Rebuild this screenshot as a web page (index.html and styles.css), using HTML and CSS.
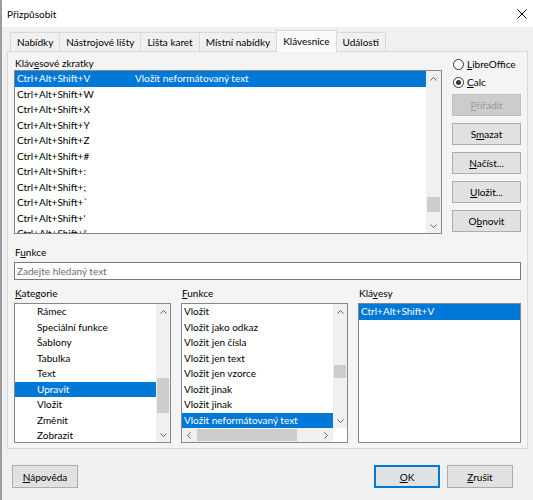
FILE: index.html
```html
<!DOCTYPE html>
<html lang="cs">
<head>
<meta charset="utf-8">
<title>Přizpůsobit</title>
<link rel="stylesheet" href="styles.css">
</head>
<body>
<div class="window">
  <header class="titlebar">
    <span class="title">Přizpůsobit</span>
    <svg class="close" width="10" height="10" viewBox="0 0 10 10"><path d="M0.5 0.5L9.5 9.5M9.5 0.5L0.5 9.5" stroke="#000" stroke-width="1" fill="none"/></svg>
  </header>
  <nav class="tabs">
    <div class="tab">Nabídky</div>
    <div class="tab">Nástrojové lišty</div>
    <div class="tab">Lišta karet</div>
    <div class="tab">Místní nabídky</div>
    <div class="tab active">Klávesnice</div>
    <div class="tab">Události</div>
  </nav>
  <section class="page">
    <div class="top">
      <div class="shortcuts">
        <div class="label">Kláv<u>e</u>sové zkratky</div>
        <div class="listbox keys">
          <div class="items">
            <div class="row sel"><span class="c1">Ctrl+Alt+Shift+V</span><span>Vložit neformátovaný text</span></div>
            <div class="row"><span class="c1">Ctrl+Alt+Shift+W</span></div>
            <div class="row"><span class="c1">Ctrl+Alt+Shift+X</span></div>
            <div class="row"><span class="c1">Ctrl+Alt+Shift+Y</span></div>
            <div class="row"><span class="c1">Ctrl+Alt+Shift+Z</span></div>
            <div class="row"><span class="c1">Ctrl+Alt+Shift+#</span></div>
            <div class="row"><span class="c1">Ctrl+Alt+Shift+:</span></div>
            <div class="row"><span class="c1">Ctrl+Alt+Shift+;</span></div>
            <div class="row"><span class="c1">Ctrl+Alt+Shift+`</span></div>
            <div class="row"><span class="c1">Ctrl+Alt+Shift+'</span></div>
            <div class="row"><span class="c1">Ctrl+Alt+Shift+[</span></div>
          </div>
          <div class="vscroll wide">
            <div class="arr"><svg width="7" height="4" viewBox="0 0 7 4"><path d="M0.5 3.5L3.5 0.5L6.5 3.5" stroke="#606060" fill="none"/></svg></div>
            <div class="track"><div class="thumb" style="margin-top:111px;height:15px"></div></div>
            <div class="arr"><svg width="7" height="4" viewBox="0 0 7 4"><path d="M0.5 0.5L3.5 3.5L6.5 0.5" stroke="#606060" fill="none"/></svg></div>
          </div>
        </div>
      </div>
      <div class="side">
        <div class="radio"><span class="circle"></span><span><u>L</u>ibreOffice</span></div>
        <div class="radio second"><span class="circle on"></span><span><u>C</u>alc</span></div>
        <button class="btn first" disabled><span><u>P</u>řiřadit</span></button>
        <button class="btn"><span>S<u>m</u>azat</span></button>
        <button class="btn"><span><u>N</u>ačíst...</span></button>
        <button class="btn"><span><u>U</u>ložit...</span></button>
        <button class="btn"><span>O<u>b</u>novit</span></button>
      </div>
    </div>

    <div class="label search-label">F<u>u</u>nkce</div>
    <div class="search">Zadejte hledaný text</div>

    <div class="lists">
      <div class="column">
        <div class="label"><u>K</u>ategorie</div>
        <div class="listbox cat">
          <div class="items">
            <div class="row indent">Rámec</div>
            <div class="row indent">Speciální funkce</div>
            <div class="row indent">Šablony</div>
            <div class="row indent">Tabulka</div>
            <div class="row indent">Text</div>
            <div class="row indent sel">Upravit</div>
            <div class="row indent">Vložit</div>
            <div class="row indent">Změnit</div>
            <div class="row indent">Zobrazit</div>
          </div>
          <div class="vscroll">
            <div class="arr"><svg width="7" height="4" viewBox="0 0 7 4"><path d="M0.5 3.5L3.5 0.5L6.5 3.5" stroke="#606060" fill="none"/></svg></div>
            <div class="track"><div class="thumb" style="margin-top:59px;height:35px"></div></div>
            <div class="arr"><svg width="7" height="4" viewBox="0 0 7 4"><path d="M0.5 0.5L3.5 3.5L6.5 0.5" stroke="#606060" fill="none"/></svg></div>
          </div>
        </div>
      </div>
      <div class="column">
        <div class="label"><u>F</u>unkce</div>
        <div class="listbox func">
          <div class="items">
            <div class="row">Vložit</div>
            <div class="row">Vložit jako odkaz</div>
            <div class="row">Vložit jen čísla</div>
            <div class="row">Vložit jen text</div>
            <div class="row">Vložit jen vzorce</div>
            <div class="row">Vložit jinak</div>
            <div class="row">Vložit jinak</div>
            <div class="row sel">Vložit neformátovaný text</div>
          </div>
          <div class="vscroll">
            <div class="arr"><svg width="7" height="4" viewBox="0 0 7 4"><path d="M0.5 3.5L3.5 0.5L6.5 3.5" stroke="#606060" fill="none"/></svg></div>
            <div class="track"><div class="thumb" style="margin-top:46px;height:13px"></div></div>
            <div class="arr"><svg width="7" height="4" viewBox="0 0 7 4"><path d="M0.5 0.5L3.5 3.5L6.5 0.5" stroke="#606060" fill="none"/></svg></div>
          </div>
          <div class="hscroll">
            <div class="harr"><svg width="4" height="7" viewBox="0 0 4 7"><path d="M3.5 0.5L0.5 3.5L3.5 6.5" stroke="#606060" fill="none"/></svg></div>
            <div class="htrack"><div class="hthumb" style="margin-left:1px;width:100px"></div></div>
            <div class="harr"><svg width="4" height="7" viewBox="0 0 4 7"><path d="M0.5 0.5L3.5 3.5L0.5 6.5" stroke="#606060" fill="none"/></svg></div>
          </div>
          <div class="corner"></div>
        </div>
      </div>
      <div class="column">
        <div class="label">Klá<u>v</u>esy</div>
        <div class="listbox plain">
          <div class="items">
            <div class="row sel">Ctrl+Alt+Shift+V</div>
          </div>
        </div>
      </div>
    </div>
  </section>
  <footer class="footer">
    <button class="btn wide help"><span><u>N</u>ápověda</span></button>
    <button class="btn wide default"><span><u>O</u>K</span></button>
    <button class="btn wide"><span><u>Z</u>rušit</span></button>
  </footer>
</div>
</body>
</html>
```

FILE: styles.css
```css
* { box-sizing: border-box; }
html, body { margin: 0; padding: 0; }
body {
  width: 533px;
  height: 500px;
  overflow: hidden;
  background: #f0f0f0;
  font-family: Lato, "Noto Sans", sans-serif;
  font-size: 10px;
  color: #000;
}
u { text-decoration: underline; text-underline-offset: 1px; }

.window {
  height: 500px;
  border-left: 2px solid #9c9c9c;
  display: flex;
  flex-direction: column;
}

.titlebar {
  height: 27px;
  flex: none;
  background: #fff;
  display: flex;
  align-items: center;
  justify-content: space-between;
  padding: 0 6px 0 5px;
}
.title { font-size: 10px; }

.tabs {
  display: flex;
  align-items: flex-end;
  height: 21px;
  margin-top: 3px;
  padding-left: 8px;
  flex: none;
}
.tab {
  height: 19px;
  padding: 0 6px;
  border: 1px solid #d9d9d9;
  border-bottom: none;
  margin-left: -1px;
  background: #f0f0f0;
  display: flex;
  align-items: center;
}
.tab:first-child { margin-left: 0; }
.tab.active {
  height: 22px;
  margin-bottom: -1px;
  background: #fafafa;
  position: relative;
  z-index: 1;
  padding-bottom: 2px;
}

.page {
  margin: 0 5px 0 5px;
  border: 1px solid #d9d9d9;
  background: #f4f4f4;
  padding: 5px 6px 5px 6px;
}

.label { height: 13px; line-height: 13px; padding-left: 1px; white-space: nowrap; }

.top {
  display: grid;
  grid-template-columns: 428px 1fr;
  column-gap: 10px;
}

.listbox {
  background: #fff;
  border: 1px solid #828790;
  display: flex;
  overflow: hidden;
}
.listbox.keys { height: 164px; }
.items { flex: 1; overflow: hidden; min-width: 0; }
.row {
  height: 15.5px;
  line-height: 15.5px;
  padding-left: 2px;
  white-space: nowrap;
}
.row.indent { padding-left: 22px; }
.row.sel { background: #0078d7; color: #fff; }
.c1 { display: inline-block; width: 118px; }

.vscroll {
  width: 14px;
  flex: none;
  display: flex;
  flex-direction: column;
  background: #f0f0f0;
}
.vscroll.wide { width: 15px; }
.arr {
  height: 15px;
  flex: none;
  display: flex;
  align-items: center;
  justify-content: center;
}
.track { flex: 1; }
.thumb { background: #cdcdcd; margin: 0 1px; }

.side { display: flex; flex-direction: column; }
.radio {
  height: 14px;
  display: flex;
  align-items: center;
  gap: 3px;
  white-space: nowrap;
}
.radio.second { margin-top: 4px; }
.circle {
  width: 11px;
  height: 11px;
  margin-left: 1px;
  border: 1px solid #333;
  border-radius: 50%;
  background: #fff;
  display: flex;
  align-items: center;
  justify-content: center;
}
.circle.on::after {
  content: "";
  width: 5px;
  height: 5px;
  border-radius: 50%;
  background: #333;
}

.btn {
  height: 22px;
  margin-top: 7px;
  border: 1px solid #adadad;
  background: #e1e1e1;
  font: inherit;
  color: #000;
  padding: 0;
  display: flex;
  align-items: center;
  justify-content: center;
}
.btn.first { margin-top: 5px; }
.btn:disabled { background: #cccccc; border-color: #bfbfbf; color: #9a9a9a; }

.search-label { margin-top: 11px; height: 14px; line-height: 14px; }
.search {
  margin-top: 3px;
  height: 18px;
  border: 1px solid #7a7a7a;
  background: #fff;
  color: #6d6d6d;
  line-height: 16px;
  padding-left: 2px;
}

.lists {
  margin-top: 6px;
  display: grid;
  grid-template-columns: 157px 167px 1fr;
  column-gap: 10px;
}
.column .label { height: 14px; line-height: 14px; margin-bottom: 3px; }
.listbox.cat, .listbox.func, .listbox.plain { height: 140px; }
.listbox.func {
  display: grid;
  grid-template-columns: 1fr 14px;
  grid-template-rows: 1fr 14px;
}
.listbox.func .vscroll { width: 14px; }
.hscroll {
  display: flex;
  background: #f0f0f0;
}
.harr {
  width: 14px;
  flex: none;
  display: flex;
  align-items: center;
  justify-content: center;
}
.htrack { flex: 1; display: flex; padding: 1px 0; }
.hthumb { background: #cdcdcd; }
.corner { background: #fff; }

.footer {
  display: flex;
  gap: 7px;
  padding: 16px 20px 0 10px;
}
.btn.wide { width: 66px; height: 23px; margin-top: 0; }
.btn.help { margin-right: auto; }
.btn.default { border-color: #0078d7; box-shadow: inset 0 0 0 1px #0078d7; }
```
